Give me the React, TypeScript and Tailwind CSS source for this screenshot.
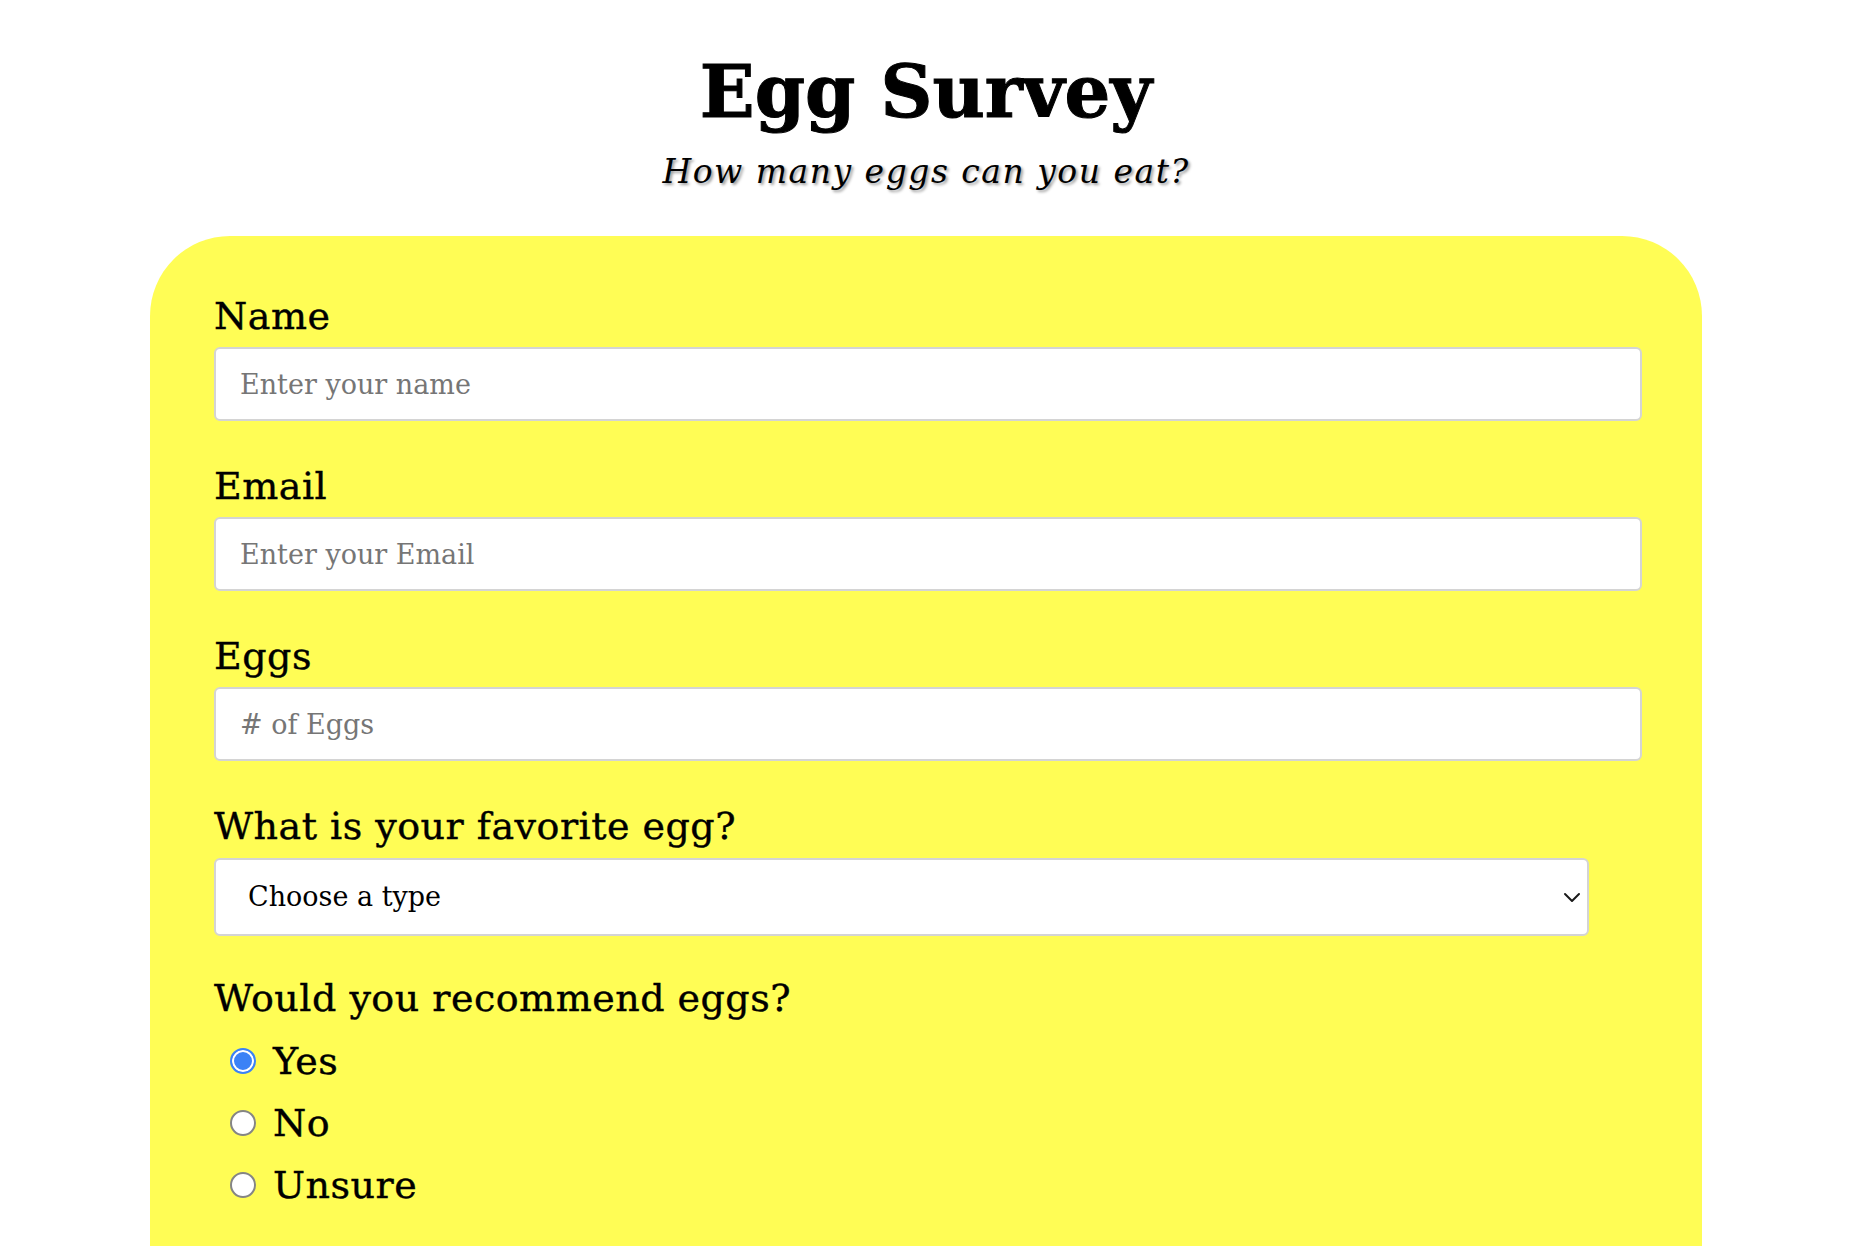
const fields = [
  { label: 'Name', placeholder: 'Enter your name', type: 'text' },
  { label: 'Email', placeholder: 'Enter your Email', type: 'email' },
  { label: 'Eggs', placeholder: '# of Eggs', type: 'number' },
];

const answers = ['Yes', 'No', 'Unsure'];

const serif = "font-['DejaVu_Serif',_'Liberation_Serif',_serif]";
const labelCls = 'text-[38px] leading-[44px] tracking-[0.5px] [-webkit-text-stroke:0.4px_#000]';

export default function App() {
  return (
    <div className={`h-screen overflow-hidden bg-white pr-2 text-black ${serif}`}>
      <div className="mx-auto flex w-[1552px] flex-col items-center">
        <h1 className="mt-[52px] text-[72px] font-bold leading-[80px] [-webkit-text-stroke:1px_#000]">Egg Survey</h1>
        <p className="mt-[22px] text-[33px] italic leading-[36px] tracking-[1.5px] [text-shadow:2px_2px_3px_#9a9a9a]">
          How many eggs can you eat?
        </p>

        <form className="mt-[46px] flex w-full flex-col gap-[43px] rounded-t-[80px] bg-[#fffd55] pb-40 pl-16 pr-[60px] pt-[58px]">
          {fields.map((f) => (
            <div key={f.label} className="flex flex-col">
              <label className={labelCls}>{f.label}</label>
              <input
                type={f.type}
                placeholder={f.placeholder}
                className={`mt-[9px] h-[74px] w-full rounded-md border-2 border-[#d4d4d4] bg-white px-6 text-[27px] outline-none placeholder:text-[#767676] ${serif}`}
              />
            </div>
          ))}

          <div className="flex flex-col">
            <label className={labelCls}>What is your favorite egg?</label>
            <div className="relative mt-[10px] w-[1375px]">
              <select
                defaultValue=""
                className={`h-[78px] w-full appearance-none rounded-md border-2 border-[#d4d4d4] bg-white pl-8 text-[27px] text-black outline-none ${serif}`}
              >
                <option value="">Choose a type</option>
                <option value="fried">Fried</option>
                <option value="scrambled">Scrambled</option>
                <option value="boiled">Boiled</option>
                <option value="poached">Poached</option>
              </select>
              <svg
                className="pointer-events-none absolute right-[8px] top-1/2 h-[12px] w-[18px] -translate-y-1/2"
                viewBox="0 0 18 12"
                fill="none"
              >
                <path d="M2 3l7 7 7-7" stroke="#1a1a1a" strokeWidth="2" strokeLinecap="round" strokeLinejoin="round" />
              </svg>
            </div>
          </div>

          <div className="-mt-[3px] flex flex-col">
            <label className={labelCls}>Would you recommend eggs?</label>
            <div className="mt-[10px] flex flex-col">
              {answers.map((a, i) => (
                <label
                  key={a}
                  className="flex h-[62px] items-center pl-4 text-[38px] leading-[62px] tracking-[0.5px] [-webkit-text-stroke:0.4px_#000]"
                >
                  <input
                    type="radio"
                    name="recommend"
                    defaultChecked={i === 0}
                    className="mr-[17px] h-[26px] w-[26px] shrink-0 appearance-none rounded-full border-2 border-[#858585] bg-white checked:border-[#3b82f6] checked:bg-[#3b82f6] checked:shadow-[inset_0_0_0_2px_#fff]"
                  />
                  {a}
                </label>
              ))}
            </div>
          </div>
        </form>
      </div>
    </div>
  );
}
